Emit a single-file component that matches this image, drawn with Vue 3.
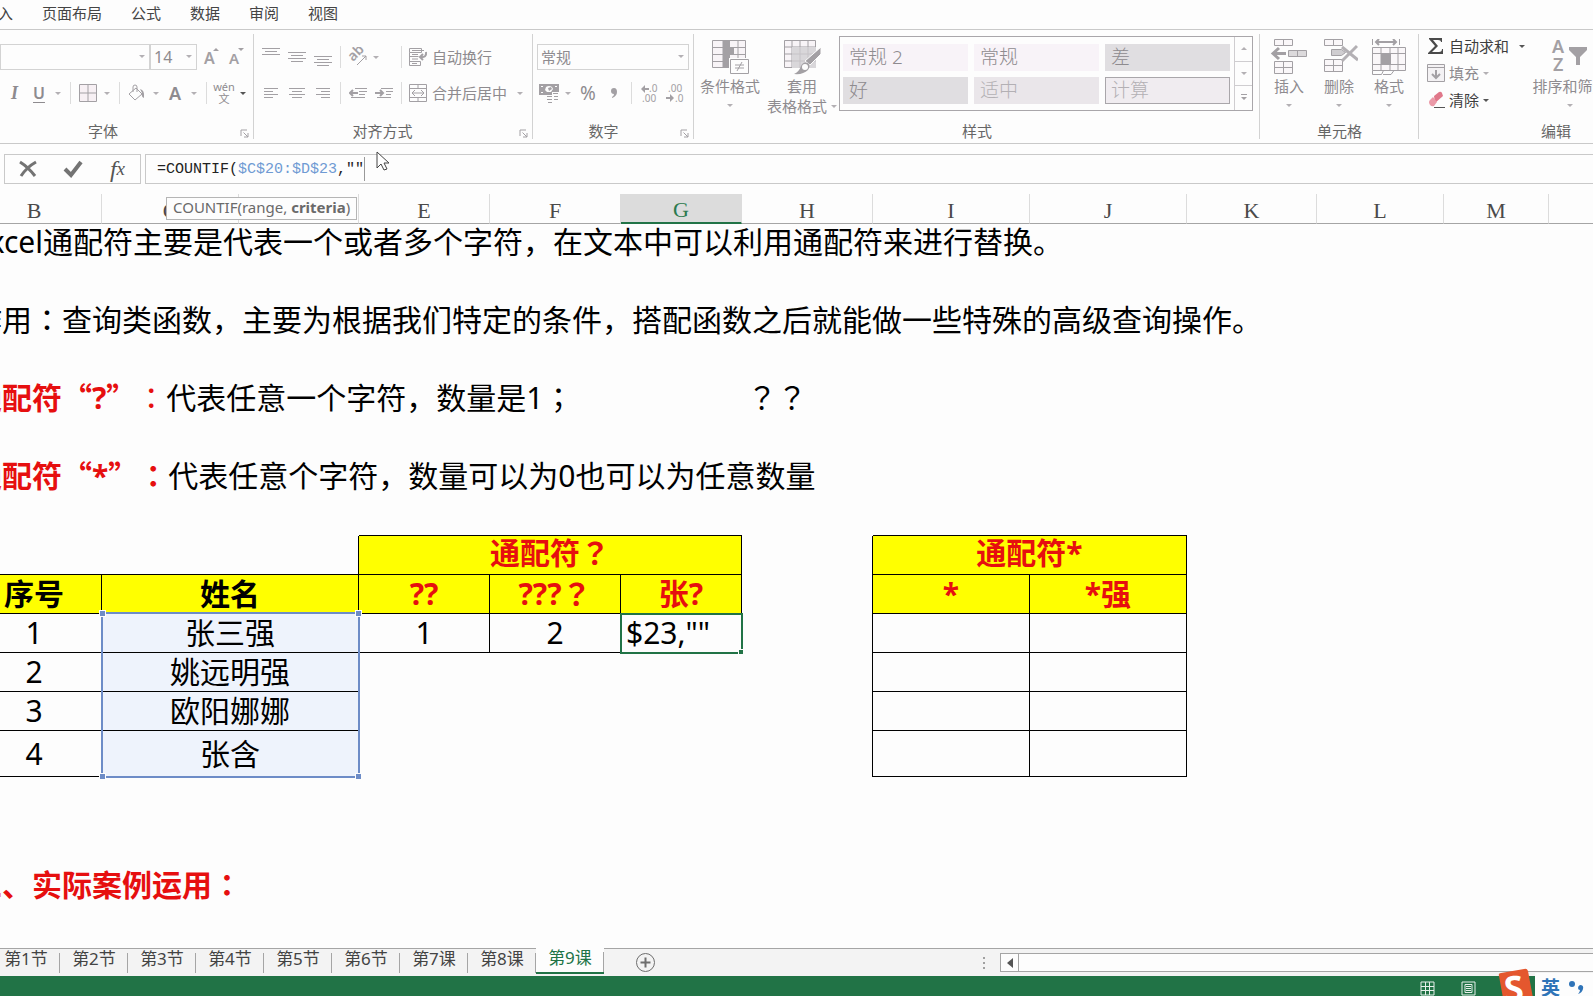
<script setup>
import { ref } from 'vue'

const menus = ['插入', '页面布局', '公式', '数据', '审阅', '视图']
const styles = [
  { name: '常规 2', kind: 'plain' },
  { name: '常规', kind: 'plain' },
  { name: '差', kind: 'bad' },
  { name: '好', kind: 'bad' },
  { name: '适中', kind: 'neutral' },
  { name: '计算', kind: 'calc' },
]
const columns = [
  { id: 'B', w: 135 }, { id: 'C', w: 137 }, { id: 'D', w: 120 }, { id: 'E', w: 131 },
  { id: 'F', w: 131 }, { id: 'G', w: 121 }, { id: 'H', w: 131 }, { id: 'I', w: 157 },
  { id: 'J', w: 157 }, { id: 'K', w: 130 }, { id: 'L', w: 127 }, { id: 'M', w: 105 },
]
const people = [
  { no: 2, name: '姚远明强' },
  { no: 3, name: '欧阳娜娜' },
  { no: 4, name: '张含' },
]
const sheets = ['第1节', '第2节', '第3节', '第4节', '第5节', '第6节', '第7课', '第8课', '第9课']
const activeSheet = ref('第9课')
const cellValue = ref('$23,""')
</script>

<template>
  <div class="app">
    <nav class="menu" aria-label="菜单">
      <button v-for="m in menus" :key="m" type="button">{{ m }}</button>
    </nav>

    <div class="ribbon">
      <section class="group font-group">
        <div class="row">
          <span class="combo font-combo">
            <select aria-label="字体名称"><option></option></select>
            <i class="caret"></i>
          </span>
          <span class="combo size-combo">
            <select aria-label="字号"><option>14</option></select>
            <i class="caret"></i>
          </span>
          <button type="button" class="tool" aria-label="增大字号">
            <svg width="20" height="20" viewBox="0 0 20 20"><text x="3" y="17" font-size="16" class="glyph">A</text><path d="M12 4l3-3 3 3z" /></svg>
          </button>
          <button type="button" class="tool" aria-label="减小字号">
            <svg width="20" height="20" viewBox="0 0 20 20"><text x="4" y="17" font-size="15" class="glyph">A</text><path d="M13 1h6l-3 3z" /></svg>
          </button>
        </div>
        <div class="row inset">
          <button type="button" class="tool italic" aria-label="倾斜">I</button>
          <button type="button" class="split underline" aria-label="下划线"><span>U</span><i class="caret"></i></button>
          <i class="sep"></i>
          <button type="button" class="split" aria-label="边框">
            <svg width="18" height="18" viewBox="0 0 18 18" class="line"><path d="M.5 .5h17v17H.5zM9 .5v17M.5 9h17" fill="#f7f0f4" /></svg><i class="caret"></i>
          </button>
          <i class="sep"></i>
          <button type="button" class="split" aria-label="填充颜色">
            <svg width="18" height="18" viewBox="0 0 18 18" class="line"><path d="M8 4l6 6-7 6-6-6zM5 8V3q0-2 2-2t2 2v5" /><path d="M12 5q5 1 4 9-3-1-2-5z" class="solid" /></svg><i class="caret"></i>
          </button>
          <button type="button" class="split fontcolor" aria-label="字体颜色"><span>A</span><i class="caret"></i></button>
          <i class="sep"></i>
          <button type="button" class="split" aria-label="拼音指南"><span class="pinyin"><span>wén</span><span>文</span></span><i class="caret dark"></i></button>
        </div>
        <h2>字体</h2>
        <button type="button" class="launch" aria-label="字体设置"><svg width="9" height="9" viewBox="0 0 9 9" class="line"><path d="M1 7V1h6M3.500 3.500L8 8M8 4v4H4" /></svg></button>
      </section>

      <section class="group align-group">
        <div class="row">
          <button type="button" class="tool" aria-label="顶端对齐"><svg width="18" height="18" viewBox="0 0 18 18" class="line"><path d="M0 .5h18M3 3.500h12M0 6.500h18" /></svg></button>
          <button type="button" class="tool" aria-label="垂直居中"><svg width="18" height="18" viewBox="0 0 18 18" class="line"><path d="M0 4.500h18M3 7.500h12M0 10.500h18M3 13.500h12" /></svg></button>
          <button type="button" class="tool" aria-label="底端对齐"><svg width="18" height="18" viewBox="0 0 18 18" class="line"><path d="M0 8.500h18M3 11.500h12M0 14.500h18M3 17.500h12" /></svg></button>
          <i class="sep"></i>
          <span class="cell52">
            <button type="button" class="split" aria-label="方向">
              <svg width="20" height="20" viewBox="0 0 20 20" class="line"><text x="0" y="0" font-size="14" class="glyph" transform="translate(6 15) rotate(-45)">ab</text><path d="M10 18l9-9M15 9h4v4" /></svg><i class="caret"></i>
            </button>
          </span>
          <i class="sep"></i>
          <button type="button" class="labelled">
            <svg width="20" height="20" viewBox="0 0 20 20" class="line"><path d="M1.500 1.500h12v4h-12zM1.500 5.500v13h11v-4M1.500 9.500h9M1.500 14.500h11M4 3.500h12M4 7.500h6M4 12h6M4 16.500h5" /><path d="M18 5q1 6-6 5M15 7l-3 3 3 3" stroke-width="2" /></svg>自动换行
          </button>
        </div>
        <div class="row">
          <button type="button" class="tool" aria-label="左对齐"><svg width="16" height="12" viewBox="0 0 16 12" class="line"><path d="M1 1.500h14M1 4.500h9M1 7.500h14M1 10.500h9" /></svg></button>
          <button type="button" class="tool" aria-label="居中"><svg width="16" height="12" viewBox="0 0 16 12" class="line"><path d="M0 1.500h16M3 4.500h10M0 7.500h16M3 10.500h10" /></svg></button>
          <button type="button" class="tool" aria-label="右对齐"><svg width="16" height="12" viewBox="0 0 16 12" class="line"><path d="M1 1.500h14M6 4.500h9M1 7.500h14M6 10.500h9" /></svg></button>
          <i class="sep"></i>
          <button type="button" class="tool" aria-label="减少缩进"><svg width="18" height="12" viewBox="0 0 18 12" class="line"><path d="M6 1.500h12M10 4.500h8M10 7.500h6M2 10.500h14" /><path d="M9 6H1M4 3L1 6l3 3" stroke-width="2" /></svg></button>
          <button type="button" class="tool" aria-label="增加缩进"><svg width="18" height="12" viewBox="0 0 18 12" class="line"><path d="M6 1.500h12M11 4.500h7M11 7.500h5M2 10.500h14" /><path d="M0 6h8M5 3l3 3-3 3" stroke-width="2" /></svg></button>
          <i class="sep"></i>
          <button type="button" class="labelled">
            <svg width="20" height="20" viewBox="0 0 20 20" class="line"><path d="M1.500 1.500h17v17h-17zM1.500 5.500h17M1.500 14.500h17M10 1.500v4M10 14.500v4M4 10h12M7 7l-3 3 3 3M13 7l3 3-3 3" /></svg>合并后居中<i class="caret far"></i>
          </button>
        </div>
        <h2>对齐方式</h2>
        <button type="button" class="launch" aria-label="对齐设置"><svg width="9" height="9" viewBox="0 0 9 9" class="line"><path d="M1 7V1h6M3.500 3.500L8 8M8 4v4H4" /></svg></button>
      </section>

      <section class="group number-group">
        <div class="row">
          <span class="combo number-combo">
            <select aria-label="数字格式"><option>常规</option></select>
            <i class="caret"></i>
          </span>
        </div>
        <div class="row">
          <button type="button" class="split" aria-label="会计数字格式">
            <svg width="20" height="20" viewBox="0 0 20 20"><path d="M0 1h20v11H0z" /><path d="M2 3h2v1H2zM2 9h2v1H2zM16 3h2v1h-2zM7 4q3-2 6 0l1 2-2 3H8L6 7z" fill="#fdfdfd" /><path d="M9 5l3-1 1 2-3 2z" /><path d="M13 9h7v11H7v-8h6z" fill="#fdfdfd" /><path d="M8 13h5v1H8zM8 16h5v1H8zM9 19h4v1H9zM14 10h5v1h-5zM15 13h4v1h-4zM15 16h4v1h-4z" /></svg><i class="caret"></i>
          </button>
          <button type="button" class="tool percent" aria-label="百分比样式">%</button>
          <button type="button" class="tool" aria-label="千位分隔样式"><svg width="8" height="12" viewBox="0 0 8 12"><path d="M4 1q3 0 3 4 0 4-5 6v-1q2-1 2-3-3 0-3-3t3-3z" /></svg></button>
          <i class="sep"></i>
          <button type="button" class="tool" aria-label="增加小数位数"><svg width="18" height="20" viewBox="0 0 18 20"><path d="M1 6l4-4v3h4v2H5v3z" /><text x="9" y="9" font-size="10">.0</text><text x="2" y="19" font-size="10">.00</text></svg></button>
          <button type="button" class="tool" aria-label="减少小数位数"><svg width="18" height="20" viewBox="0 0 18 20"><text x="2" y="9" font-size="10">.00</text><path d="M8 15l-4-4v3H0v2h4v3z" /><text x="9" y="19" font-size="10">.0</text></svg></button>
        </div>
        <h2>数字</h2>
        <button type="button" class="launch" aria-label="数字设置"><svg width="9" height="9" viewBox="0 0 9 9" class="line"><path d="M1 7V1h6M3.500 3.500L8 8M8 4v4H4" /></svg></button>
      </section>

      <section class="group style-group">
        <div class="bigrow">
          <button type="button" class="big wide">
            <svg width="38" height="36" viewBox="0 0 38 36" class="line"><path d="M1.500 1.500h33v27h-33zM1.500 8.500h33M1.500 15.500h33M1.500 22.500h33M12 2v27M27 2v27" fill="#f8f4f7" /><path d="M12 2h7v7h-7zM12 9h11v6H12zM12 16h7v6h-7zM12 23h6v6h-6z" class="solid" /><path d="M18 19h20v17H18z" fill="#fdfdfd" stroke="none" /><path d="M19.500 20.500h18v14h-18z" fill="#fdfdfd" /><path d="M24 26h9M24 29h9M31 23l-5 9" /></svg>
            <span>条件格式</span><i class="caret"></i>
          </button>
          <button type="button" class="big wide">
            <svg width="38" height="36" viewBox="0 0 38 36" class="line"><path d="M1.500 1.500h31v27h-31zM1.500 8h31M1.500 15h31M1.500 22h31M9 1v28M17 1v28M25 1v28" fill="#f8f4f7" /><path d="M9 8h24v21H9z" fill="#d9d7da" stroke="none" /><path d="M9 15h24M9 22h24M17 8v21M25 8v21" stroke="#c6c3c7" /><path d="M38 8v7L27 26l-5-4z" fill="#a3a0a4" stroke="#fdfdfd" /><path d="M11 35q5-2 7-8 2-5 7-3 3 3 0 7-5 5-14 4z" class="solid" /><circle cx="22" cy="28" r="3" fill="#fdfdfd" stroke="none" /></svg>
            <span>套用</span><span>表格格式<i class="caret"></i></span>
          </button>
          <div class="gallery">
            <div class="swatches">
              <button v-for="(s, i) in styles" :key="i" type="button" :class="s.kind">{{ s.name }}</button>
            </div>
            <div class="scroller">
              <button type="button" aria-label="上一行"><i class="caret up"></i></button>
              <button type="button" aria-label="下一行"><i class="caret"></i></button>
              <button type="button" aria-label="其他样式"><svg width="8" height="8" viewBox="0 0 8 8"><path d="M1 0h6v1H1zM1 3h6L4 6z" /></svg></button>
            </div>
          </div>
        </div>
        <h2>样式</h2>
      </section>

      <section class="group cells-group">
        <div class="bigrow">
          <button type="button" class="big">
            <svg width="38" height="36" viewBox="0 0 38 36" class="line"><path d="M4.500 .5h18v6h-18zM13.500 .5v6M4.500 22.500h18v12h-18zM13.500 22.500v12M4.500 28.500h18" fill="#faf7f9" /><path d="M18.500 11.500h18v6h-18zM27.500 11.500v6" fill="#dcdadc" /><path d="M16 14.500H3M9 9l-6 5.500L9 20" stroke-width="3" /></svg>
            <span>插入</span><i class="caret"></i>
          </button>
          <button type="button" class="big">
            <svg width="38" height="36" viewBox="0 0 38 36" class="line"><path d="M4.500 .5h18v6h-18zM13.500 .5v6M4.500 20.500h18v12h-18zM13.500 20.500v12M4.500 26.500h18" fill="#faf7f9" /><path d="M11.500 10.500h10l4 3-4 3h-10z" fill="#cfcdd0" /><path d="M22 8l16 13M37 7L22 22" stroke-width="3" stroke="#b3b0b4" /></svg>
            <span>删除</span><i class="caret"></i>
          </button>
          <button type="button" class="big">
            <svg width="38" height="36" viewBox="0 0 38 36" class="line"><path d="M2.500 8.500h33v23h-33zM2.500 14.500h33M2.500 25.500h33M11 8.500v23M20 8.500v23M28 8.500v23" fill="#faf7f9" /><path d="M11 14h10v12H11z" class="solid" /><path d="M2.500 0v6M29.500 0v6" /><path d="M6 3h20M9 0L6 3l3 3M23 0l3 3-3 3" stroke-width="2" /><path d="M2.500 31.500v4h9l2-4M13 35.500h8l3-4" /></svg>
            <span>格式</span><i class="caret"></i>
          </button>
        </div>
        <h2>单元格</h2>
      </section>

      <section class="group edit-group">
        <div class="bigrow">
          <div class="stack">
            <button type="button" class="active"><svg width="18" height="18" viewBox="0 0 18 18"><path d="M2 1h13v4h-1q0-2-3-2H6l5 6-6 6h7q3 0 3-3h1v5H1v-1l7-7-6-7z" fill="#4a4a4a" /></svg>自动求和<i class="caret dark far"></i></button>
            <button type="button"><svg width="18" height="18" viewBox="0 0 18 18" class="line"><path d="M.5 .5h17v17H.5zM.5 3.500h17" fill="#f4f2f4" /><path d="M9 6v8M5 10l4 4 4-4" stroke-width="2" /></svg>填充<i class="caret"></i></button>
            <button type="button" class="active"><svg width="18" height="18" viewBox="0 0 18 18"><path d="M7 5l5-4q2-1 3 1l1 3-8 7z" fill="#e0788a" /><path d="M6 6l4 5-3 4q-2 1-4-1-2-3 0-5z" fill="#eb9aa8" /><path d="M7 16h11v1H7z" fill="#555" /></svg>清除<i class="caret dark"></i></button>
          </div>
          <button type="button" class="big sort">
            <svg width="38" height="36" viewBox="0 0 38 36"><text x="1" y="14" font-size="18" class="glyph">A</text><text x="2" y="32" font-size="18" class="glyph">Z</text><path d="M18 8h18v3l-7 7v8h-4v-8l-7-7z" /></svg>
            <span>排序和筛选</span><i class="caret"></i>
          </button>
        </div>
        <h2>编辑</h2>
      </section>
    </div>

    <div class="formula-bar">
      <div class="formula-tools">
        <button type="button" aria-label="取消"><svg width="20" height="18" viewBox="0 0 20 18"><path d="M2 2q8 5 15 14M18 2Q9 7 3 16" fill="none" stroke="#737373" stroke-width="3" /></svg></button>
        <button type="button" aria-label="输入"><svg width="20" height="18" viewBox="0 0 20 18"><path d="M2 9l6 6L18 2" fill="none" stroke="#737373" stroke-width="4" /></svg></button>
        <button type="button" class="fx" aria-label="插入函数">f<span>x</span></button>
      </div>
      <div class="formula" role="textbox" aria-label="编辑栏" contenteditable="true" spellcheck="false">=COUNTIF(<span class="ref">$C$20:$D$23</span>,""<i class="cursor"></i></div>
    </div>

    <div class="tip">COUNTIF(range, <b>criteria</b>)</div>
    <svg class="pointer" width="14" height="21" viewBox="0 0 14 21"><path d="M1 1v16l4-4 3 6 3-1-3-6h5z" fill="#fff" stroke="#444" /></svg>

    <main class="sheet">
      <table>
        <colgroup>
          <col v-for="c in columns" :key="c.id" :style="{ width: c.w + 'px' }" />
          <col class="rest" />
        </colgroup>
        <thead>
          <tr><th v-for="c in columns" :key="c.id" scope="col" :class="{ current: c.id === 'G' }">{{ c.id }}</th><th></th></tr>
        </thead>
        <tbody>
          <tr><td class="note">Excel通配符主要是代表一个或者多个字符，在文本中可以利用通配符来进行替换。</td></tr>
          <tr><td></td></tr>
          <tr><td class="note">作用<span class="mid">：</span>查询类函数，主要为根据我们特定的条件，搭配函数之后就能做一些特殊的高级查询操作。</td></tr>
          <tr><td></td></tr>
          <tr><td class="note"><b>通配符<span class="cjk">“</span>?<span class="cjk">”</span></b><span class="mid red">：</span>代表任意一个字符，数量是1<span class="mid">；</span></td><td colspan="5"></td><td class="note"><span class="mid">？？</span></td></tr>
          <tr><td></td></tr>
          <tr><td class="note"><b>通配符<span class="cjk">“</span>*<span class="cjk">”</span><span class="mid">：</span></b>代表任意个字符，数量可以为0也可以为任意数量</td></tr>
          <tr>
            <td colspan="3"></td><td colspan="3" class="under"></td><td></td><td colspan="2" class="under"></td>
          </tr>
          <tr>
            <td colspan="2" class="under"></td><td class="under side"></td>
            <td colspan="3" class="head title">通配符<span class="mid">？</span></td><td class="side"></td>
            <td colspan="2" class="head title">通配符*</td>
          </tr>
          <tr>
            <td class="head black">序号</td><td colspan="2" class="head black">姓名</td>
            <td class="head">??</td><td class="head">???<span class="mid">？</span></td><td class="head">张?</td>
            <td class="side"></td><td class="head">*</td><td class="head">*强</td>
          </tr>
          <tr>
            <td class="box">1</td>
            <td colspan="2" class="box picked">张三强<span class="range"><i></i><i></i><i></i><i></i></span></td>
            <td class="box">1</td><td class="box">2</td>
            <td class="box edit"><input v-model="cellValue" aria-label="G20" /><i class="handle"></i></td>
            <td class="side"></td><td class="box"></td><td class="box"></td>
          </tr>
          <tr v-for="(p, i) in people" :key="p.no" :class="{ tall: i === 2 }">
            <td class="box">{{ p.no }}</td><td colspan="2" class="box picked">{{ p.name }}</td>
            <td></td><td></td><td></td><td class="side"></td><td class="box"></td><td class="box"></td>
          </tr>
          <tr class="loose"><td></td></tr>
          <tr class="loose"><td></td></tr>
          <tr class="loose"><td class="note"><b>二、实际案例运用<span class="mid">：</span></b></td></tr>
        </tbody>
      </table>
    </main>

    <footer class="tabs">
      <div class="tablist">
        <button v-for="s in sheets" :key="s" type="button" :class="{ on: s === activeSheet }" @click="activeSheet = s">{{ s }}</button>
      </div>
      <button type="button" class="add" aria-label="新工作表"><svg width="21" height="21" viewBox="0 0 21 21"><circle cx="10.500" cy="10.500" r="9" fill="none" stroke="#6e6e6e" /><path d="M5.500 10.500h10M10.500 5.500v10" stroke="#6e6e6e" stroke-width="2" /></svg></button>
      <span class="grip"><i></i><i></i><i></i></span>
      <div class="scrollbar">
        <button type="button" aria-label="向左滚动"><svg width="6" height="10" viewBox="0 0 6 10"><path d="M6 0v10L0 5z" fill="#555" /></svg></button>
      </div>
    </footer>

    <div class="status">
      <button type="button" aria-label="普通视图"><svg width="15" height="15" viewBox="0 0 15 15"><path d="M1 1h13v13H1zM5.500 1v13M9.500 1v13M1 5.500h13M1 9.500h13" fill="none" stroke="#e6f0ea" /></svg></button>
      <button type="button" aria-label="页面布局视图"><svg width="15" height="15" viewBox="0 0 15 15"><path d="M1 1h13v13H1zM4 3.500h7v8H4zM5 5.500h5M5 7.500h5M5 9.500h5" fill="none" stroke="#e6f0ea" /></svg></button>
    </div>

    <div class="ime">
      <svg width="38" height="28" viewBox="0 0 38 28"><path d="M4 5L27 1q3-1 4 2l5 27H6L2 8q-1-3 2-3z" fill="#e4572e" /><text x="7" y="33" font-size="35" font-weight="700" transform="rotate(-6 18 20)">S</text></svg>
      <div class="ime-panel"><b>英</b><svg width="16" height="16" viewBox="0 0 16 16"><circle cx="4" cy="4" r="3" fill="#2f74b8" /><path d="M12 5q4 0 3 4-1 4-5 5 2-2 2-4-2 0-2-2t2-3z" fill="#2f74b8" /></svg></div>
    </div>
  </div>
</template>

<style>
body { margin: 0; overflow: hidden; }
</style>

<style scoped>
.app {
  position: relative;
  display: flex;
  flex-direction: column;
  height: 100vh;
  overflow: hidden;
  background: #fdfdfd;
  color: #444;
  font-family: "Noto Sans", "Noto Sans CJK SC", sans-serif;
  font-size: 15px;
  text-spacing-trim: space-all;
}
button, select, input { font: inherit; color: inherit; background: none; border: 0; padding: 0; margin: 0; border-radius: 0; }
button { display: flex; align-items: center; justify-content: center; white-space: nowrap; flex: none; }
svg { display: block; flex: none; fill: #a3a0a4; }
svg.line { fill: none; stroke: #a3a0a4; }
svg.line .solid { fill: #a3a0a4; stroke: none; }
svg text { fill: #a3a0a4; stroke: none; font-family: "Noto Sans", sans-serif; }
svg .glyph { font-weight: 600; }

.menu { display: flex; gap: 29px; height: 29px; box-sizing: border-box; margin-left: -17px; padding-bottom: 4px; flex: none; }

.ribbon { display: flex; height: 113px; border-top: 1px solid #c9c9c9; border-bottom: 1px solid #c9c9c9; flex: none; overflow: hidden; color: #8e8b8f; line-height: 20px; }
.group { position: relative; display: flex; flex-direction: column; gap: 10px; padding-top: 14px; box-sizing: border-box; flex: none; }
.group::after { content: ""; position: absolute; right: 0; top: 4px; bottom: 4px; width: 1px; background: #d2d2d2; }
.group h2 { margin: auto 0 1px; padding-right: 48px; text-align: center; font-size: 15px; font-weight: 400; color: #666; height: 22px; line-height: 22px; }
.font-group { width: 254px; }
.align-group { width: 279px; }
.number-group { width: 161px; }
.style-group { width: 566px; }
.cells-group { width: 159px; }
.edit-group { width: 274px; }
.align-group h2 { padding-right: 22px; }
.number-group h2 { padding-right: 20px; }
.style-group h2, .cells-group h2, .edit-group h2 { padding-right: 0; }
.launch { position: absolute; right: 5px; bottom: 5px; }

.row { display: flex; align-items: center; height: 26px; }
.inset { padding-left: 2px; }
.align-group .row { padding-left: 4px; }
.number-group .row { padding-left: 4px; }
.tool { width: 24px; height: 26px; }
.align-group .tool, .number-group .tool { width: 26px; }
.split { width: 38px; height: 26px; justify-content: flex-start; }
.split > :first-child { width: 24px; text-align: center; }
.caret { width: 0; height: 0; border: 3px solid transparent; border-top-color: #b3b0b4; border-bottom: 0; flex: none; }
.split .caret { width: 0; margin: 0 4px; }
.caret.dark { border-top-color: #555; }
.caret.up { border-bottom: 3px solid #b3b0b4; border-top: 0; }
.sep { width: 1px; height: 22px; margin: 0 5px; background: #dcdcdc; flex: none; }
.align-group .sep, .number-group .sep { margin: 0 4px; }
.cell52 { width: 52px; }
.labelled { gap: 4px; padding-left: 2px; }
.caret.far { margin-left: 6px; }

.combo { position: relative; display: block; height: 26px; flex: none; }
.combo select { width: 100%; height: 100%; appearance: none; border: 1px solid #d3d3d3; box-sizing: border-box; padding-left: 3px; background: #fdfdfd; opacity: 1; }
.combo .caret { position: absolute; right: 5px; top: 11px; }
.font-combo { width: 150px; }
.size-combo { width: 47px; font-size: 16px; }
.size-combo + .tool { margin-left: 2px; }
.number-combo { width: 152px; }
.italic { width: 25px; font: italic 700 18px "Liberation Serif", serif; }
.underline span { font-weight: 600; font-size: 16px; text-decoration: underline; text-underline-offset: 3px; }
.fontcolor span { font-weight: 600; font-size: 18px; }
.pinyin { display: flex; flex-direction: column; font-size: 11px; line-height: 12px; }
.percent { font-size: 19px; }

.bigrow { display: flex; height: 72px; margin-top: -8px; }
.big { flex-direction: column; justify-content: flex-start; width: 50px; padding-top: 3px; box-sizing: border-box; height: 82px; }
.big.wide { width: 72px; }
.big span { display: flex; align-items: center; gap: 4px; height: 20px; line-height: 20px; }
.big svg + span { margin-top: 1px; height: 20px; }
.big > .caret { margin-top: 8px; }
.cells-group .bigrow { padding-left: 4px; }
.gallery { display: flex; width: 414px; height: 75px; box-sizing: border-box; border: 1px solid #a9a6aa; margin-left: 1px; }
.swatches { flex: 1; display: grid; grid-template-columns: repeat(3, 1fr); grid-auto-rows: 27px; align-content: center; gap: 6px; padding: 0 4px 0 3px; }
.swatches button { justify-content: flex-start; padding-left: 6px; font-size: 19px; font-weight: 300; background: #f8f3f8; }
.swatches .bad { background: #e0dee1; }
.swatches .neutral { background: #eae6ea; color: #b3b0b4; }
.swatches .calc { background: #f0ecf0; color: #b3b0b4; border: 1px solid #a9a6aa; padding-left: 5px; }
.scroller { width: 17px; display: flex; flex-direction: column; border-left: 1px solid #cfcdd0; }
.scroller button { flex: 1; }
.scroller button + button { border-top: 1px solid #cfcdd0; }

.stack { display: flex; flex-direction: column; width: 111px; padding-left: 8px; box-sizing: border-box; gap: 7px; }
.stack button { height: 20px; justify-content: flex-start; gap: 4px; }
.stack .active { color: #3d3d3d; }
.big.sort { width: 80px; }

.formula-bar { display: flex; gap: 4px; padding: 10px 0 10px 4px; flex: none; }
.formula-tools, .formula { display: flex; align-items: center; height: 30px; box-sizing: border-box; border: 1px solid #c9c9c9; }
.formula-tools button { width: 45px; height: 28px; }
.fx { font: italic 400 24px "Liberation Serif", serif; color: #555; }
.fx span { font-size: 19px; }
.formula { flex: 1; padding-left: 11px; border-right: 0; font-family: "Liberation Mono", monospace; font-size: 15px; color: #222; outline: 0; white-space: pre; }
.ref { color: #6f9ad3; }
.cursor { width: 1px; height: 24px; background: #999; }
.tip { position: absolute; left: 166px; top: 197px; height: 23px; box-sizing: border-box; padding: 0 6px; border: 1px solid #b5b5b5; background: #fdfdfd; color: #6a6a6a; line-height: 18px; font-size: 15px; z-index: 2; }
.pointer { position: absolute; left: 376px; top: 151px; z-index: 2; }

.sheet { flex: 1; min-height: 0; overflow: hidden; color: #000; font-size: 30px; }
table { margin-left: -33px; width: calc(100% + 33px); table-layout: fixed; border-collapse: separate; border-spacing: 0; }
th { height: 30px; box-sizing: border-box; padding: 0; border-bottom: 1px solid #a5a5a5; border-right: 1px solid #dcdcdc; font: 22px/24px "Liberation Serif", serif; color: #4a4a4a; vertical-align: bottom; }
th:last-child { border-right: 0; }
th.current { background: #dcdcdc; border-bottom: 2px solid #217346; color: #2c7a4f; }
td { height: 39px; box-sizing: border-box; padding: 0; line-height: 34px; white-space: nowrap; text-align: center; }
td.note { text-align: left; padding: 0 0 4px 5px; line-height: 30px; }
.note b, .red { color: #e60f0f; }
.cjk { font-family: "Noto Sans CJK SC", sans-serif; line-height: 0; }
.mid { font-family: "Noto Sans CJK TC", sans-serif; line-height: 0; }
td.under, td.head, td.box { border-bottom: 1px solid #000; }
td.side, td.head, td.box { border-right: 1px solid #000; }
td.head { background: #ff0; color: #e60f0f; font-weight: 700; font-size: 30px; }
td.title { padding-bottom: 4px; }
td.head.black { color: #000; }
td.picked { position: relative; background: #eef3fc; }
.tall td { height: 46px; }
.loose td { height: 44px; }
.range { position: absolute; left: -1px; top: -2px; width: calc(100% + 3px); height: 166px; box-sizing: border-box; border: 2px solid #6d8cc7; z-index: 1; }
.range i { position: absolute; width: 5px; height: 5px; background: #6d8cc7; border: 1px solid #fdfdfd; }
.range i:nth-child(1) { left: -4px; top: -4px; }
.range i:nth-child(2) { right: -4px; top: -4px; }
.range i:nth-child(3) { left: -4px; bottom: -4px; }
.range i:nth-child(4) { right: -4px; bottom: -4px; }
td.edit { position: relative; }
.edit input { position: absolute; left: -1px; top: -1px; width: calc(100% + 3px); height: 41px; box-sizing: border-box; border: 2px solid #217346; background: #fdfdfd; padding: 0 0 3px 4px; outline: 0; }
.handle { position: absolute; right: -3px; bottom: -3px; width: 4px; height: 4px; background: #217346; border: 1px solid #fdfdfd; }

.tabs { display: flex; align-items: center; height: 27px; border-top: 1px solid #a5a5a5; background: #f3f3f3; flex: none; }
.tablist { display: flex; margin-left: -8px; align-self: stretch; }
.tablist button { position: relative; width: 68px; height: 24px; font-size: 17px; line-height: 18px; padding-bottom: 4px; color: #444; box-sizing: border-box; }
.tablist button::after { content: ""; position: absolute; right: 0; top: 4px; bottom: 0; width: 1px; background: #a5a5a5; }
.tablist .on { margin-top: -1px; height: 26px; background: #fdfdfd; border-bottom: 2px solid #217346; color: #217346; }
.add { margin-left: 31px; }
.grip { display: flex; flex-direction: column; gap: 3px; margin-left: auto; margin-right: 15px; }
.grip i { width: 2px; height: 2px; background: #a0a0a0; }
.scrollbar { flex: 0 0 593px; height: 19px; box-sizing: border-box; border: 1px solid #a5a5a5; border-right: 0; background: #fdfdfd; }
.scrollbar button { width: 18px; height: 17px; border-right: 1px solid #a5a5a5; }

.status { display: flex; justify-content: flex-end; align-items: center; gap: 26px; height: 20px; padding: 5px 117px 0 0; box-sizing: border-box; background: #217346; flex: none; }
.ime { position: absolute; right: 0; bottom: 0; display: flex; align-items: flex-end; height: 28px; overflow: hidden; }
.ime-panel { display: flex; align-items: center; gap: 8px; width: 58px; height: 23px; padding: 6px 0 0 6px; box-sizing: border-box; background: #fdfdfd; overflow: hidden; color: #2f74b8; font-size: 19px; line-height: 20px; }
.ime text { fill: #fff; }
</style>
